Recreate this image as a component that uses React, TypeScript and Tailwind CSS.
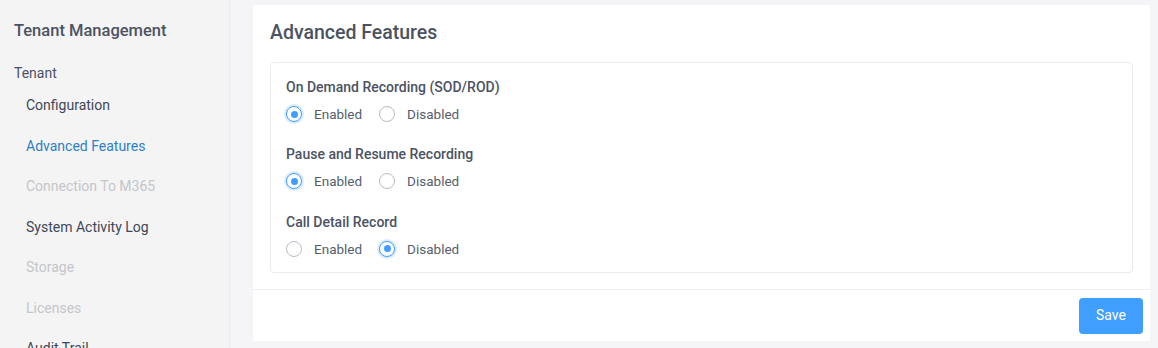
import React, { useState } from 'react';

const navItems = [
  { label: 'Configuration', state: 'normal' },
  { label: 'Advanced Features', state: 'active' },
  { label: 'Connection To M365', state: 'disabled' },
  { label: 'System Activity Log', state: 'normal' },
  { label: 'Storage', state: 'disabled' },
  { label: 'Licenses', state: 'disabled' },
  { label: 'Audit Trail', state: 'normal' },
];

const features = [
  { key: 'ondemand', label: 'On Demand Recording (SOD/ROD)', value: true },
  { key: 'pause', label: 'Pause and Resume Recording', value: true },
  { key: 'cdr', label: 'Call Detail Record', value: false },
];

const Radio: React.FC<{ checked: boolean; label: string; onClick: () => void }> = ({ checked, label, onClick }) => (
  <label className="flex items-center cursor-pointer" onClick={onClick}>
    <span
      className={
        checked
          ? 'w-4 h-4 rounded-full border border-[#409eff] bg-white flex items-center justify-center shadow-[0_0_0_2px_rgba(64,158,255,0.2)]'
          : 'w-4 h-4 rounded-full border border-[#b8bcc4] bg-white'
      }
    >
      {checked && <span className="w-[7px] h-[7px] rounded-full bg-[#409eff]" />}
    </span>
    <span className="ml-3 text-[13.5px] text-[#565e6e]">{label}</span>
  </label>
);

export default function App() {
  const [values, setValues] = useState<Record<string, boolean>>(
    Object.fromEntries(features.map((f) => [f.key, f.value]))
  );

  return (
    <div className="flex h-[348px] w-[1158px] overflow-hidden bg-[#f5f5f7] font-['Roboto',sans-serif]">
      <aside className="w-[230px] shrink-0 bg-[#f4f4f4] border-r border-[#ececec] pl-[14px] pt-[19px]">
        <h1 className="text-[16.5px] font-medium text-[#4b5363] leading-6">Tenant Management</h1>
        <p className="mt-[20px] text-[14px] text-[#4b5363] leading-5">Tenant</p>
        <ul className="mt-[12px] pl-3">
          {navItems.map((item) => (
            <li
              key={item.label}
              className={
                'h-[40.5px] text-[14px] leading-5 ' +
                (item.state === 'active'
                  ? 'text-[#2f7fc4]'
                  : item.state === 'disabled'
                  ? 'text-[#c4c6cb]'
                  : 'text-[#3f4757]')
              }
            >
              {item.label}
            </li>
          ))}
        </ul>
      </aside>

      <main className="flex-1 pl-[23px] pr-[8px] pt-[5px] pb-[7px]">
        <div className="h-full bg-white flex flex-col">
          <div className="px-[17px] pt-[16px] flex-1">
            <h2 className="text-[19.5px] font-medium text-[#4b5363] leading-6">Advanced Features</h2>
            <div className="mt-[17px] border border-[#ebebeb] rounded-[4px] px-[15px] pt-[14px] pb-[13px]">
              {features.map((f, i) => (
                <div key={f.key} className={i > 0 ? 'mt-[20px]' : ''}>
                  <div className="text-[14px] font-medium text-[#4b5363] leading-5">{f.label}</div>
                  <div className="mt-[7px] flex items-center gap-[17px]">
                    <Radio
                      checked={values[f.key]}
                      label="Enabled"
                      onClick={() => setValues({ ...values, [f.key]: true })}
                    />
                    <Radio
                      checked={!values[f.key]}
                      label="Disabled"
                      onClick={() => setValues({ ...values, [f.key]: false })}
                    />
                  </div>
                </div>
              ))}
            </div>
          </div>
          <div className="border-t border-[#eeeff2] h-[52px] flex items-center justify-end pr-[7px]">
            <button className="w-[64px] h-[36px] rounded-[4px] bg-[#409eff] text-white text-[14px]">Save</button>
          </div>
        </div>
      </main>
    </div>
  );
}
